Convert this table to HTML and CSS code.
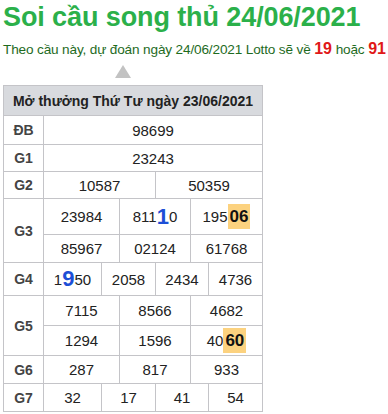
FILE: index.html
```html
<!DOCTYPE html>
<html lang="vi">
<head>
<meta charset="utf-8">
<link rel="stylesheet" href="styles.css">
</head>
<body>
<div class="page">
  <h1 class="title">Soi cầu song thủ 24/06/2021</h1>
  <p class="sub">Theo cầu này, dự đoán ngày 24/06/2021 Lotto sẽ về <b class="red">19</b> hoặc <b class="red">91</b></p>
  <div class="tri-wrap"><span class="tri"></span></div>
  <div class="table">
    <div class="head">Mở thưởng Thứ Tư ngày 23/06/2021</div>

    <div class="lbl r-db">ĐB</div>
    <div class="c c6 r-db">98699</div>

    <div class="lbl r-g1">G1</div>
    <div class="c c6 r-g1">23243</div>

    <div class="lbl r-g2">G2</div>
    <div class="c c3a r-g2">10587</div>
    <div class="c c3b r-g2">50359</div>

    <div class="lbl r-g3">G3</div>
    <div class="c t3a r-g3a">23984</div>
    <div class="c t3b r-g3a">811<b class="blue">1</b>0</div>
    <div class="c t3c r-g3a">195<b class="hl">06</b></div>
    <div class="c t3a r-g3b">85967</div>
    <div class="c t3b r-g3b">02124</div>
    <div class="c t3c r-g3b">61768</div>

    <div class="lbl r-g4">G4</div>
    <div class="c q1 r-g4">1<b class="blue">9</b>50</div>
    <div class="c q2 r-g4">2058</div>
    <div class="c q3 r-g4">2434</div>
    <div class="c q4 r-g4">4736</div>

    <div class="lbl r-g5">G5</div>
    <div class="c t3a r-g5a">7115</div>
    <div class="c t3b r-g5a">8566</div>
    <div class="c t3c r-g5a">4682</div>
    <div class="c t3a r-g5b">1294</div>
    <div class="c t3b r-g5b">1596</div>
    <div class="c t3c r-g5b">40<b class="hl">60</b></div>

    <div class="lbl r-g6">G6</div>
    <div class="c t3a r-g6">287</div>
    <div class="c t3b r-g6">817</div>
    <div class="c t3c r-g6">933</div>

    <div class="lbl r-g7">G7</div>
    <div class="c q1 r-g7">32</div>
    <div class="c q2 r-g7">17</div>
    <div class="c q3 r-g7">41</div>
    <div class="c q4 r-g7">54</div>
  </div>
</div>
</body>
</html>
```

FILE: styles.css
```css
* { box-sizing: border-box; }
html, body { margin: 0; padding: 0; background: #fff; }
body { font-family: "Liberation Sans", Arial, sans-serif; color: #222; }
.page { padding: 0 3px; width: 388px; }
.title {
  margin: 0;
  font-size: 27px;
  line-height: 34px;
  font-weight: bold;
  color: #2bb04a;
  letter-spacing: -0.1px;
}
.sub {
  margin: 5px 0 0 0;
  font-size: 13.6px;
  line-height: 20px;
  color: #1e6b1e;
  white-space: nowrap;
  letter-spacing: -0.15px;
}
.red { color: #e01818; font-size: 16px; letter-spacing: 0; }
.tri-wrap { height: 25px; padding-left: 112px; padding-top: 5px; }
.tri {
  display: block;
  width: 0; height: 0;
  border-left: 8px solid transparent;
  border-right: 8px solid transparent;
  border-bottom: 13px solid #c2c2c2;
}
.table {
  display: grid;
  width: 260px;
  grid-template-columns: 40px 58px 18px 36px 35px 18px 54px;
  grid-template-rows: 30px 29px 27px 27px 36px 28px 33px 30px 30px 28px 28px;
  border-top: 1px solid #c4c4c8;
  border-left: 1px solid #c4c4c8;
}
.table > div {
  border-right: 1px solid #c4c4c8;
  border-bottom: 1px solid #c4c4c8;
  display: flex;
  align-items: center;
  justify-content: center;
  font-size: 15px;
}
.head {
  grid-column: 1 / -1;
  grid-row: 1;
  background: #d8dade;
  font-weight: bold;
  font-size: 14px !important;
  color: #222;
}
.lbl { grid-column: 1; font-weight: bold; color: #444; font-size: 14px !important; }
.c6 { grid-column: 2 / 8; }
.c3a { grid-column: 2 / 5; }
.c3b { grid-column: 5 / 8; }
.t3a { grid-column: 2 / 4; }
.t3b { grid-column: 4 / 6; }
.t3c { grid-column: 6 / 8; }
.q1 { grid-column: 2; }
.q2 { grid-column: 3 / 5; }
.q3 { grid-column: 5 / 7; }
.q4 { grid-column: 7; }
.r-db { grid-row: 2; }
.r-g1 { grid-row: 3; }
.r-g2 { grid-row: 4; }
.r-g3 { grid-row: 5 / 7; }
.r-g3a { grid-row: 5; }
.r-g3b { grid-row: 6; }
.r-g4 { grid-row: 7; }
.r-g5 { grid-row: 8 / 10; }
.r-g5a { grid-row: 8; }
.r-g5b { grid-row: 9; }
.r-g6 { grid-row: 10; }
.r-g7 { grid-row: 11; }
.blue { color: #1d4fd6; font-size: 22px; line-height: 1; }
.hl {
  background: #fcd27f;
  color: #111;
  font-size: 17px;
  padding: 4px 2px;
  line-height: 1;
}
```
